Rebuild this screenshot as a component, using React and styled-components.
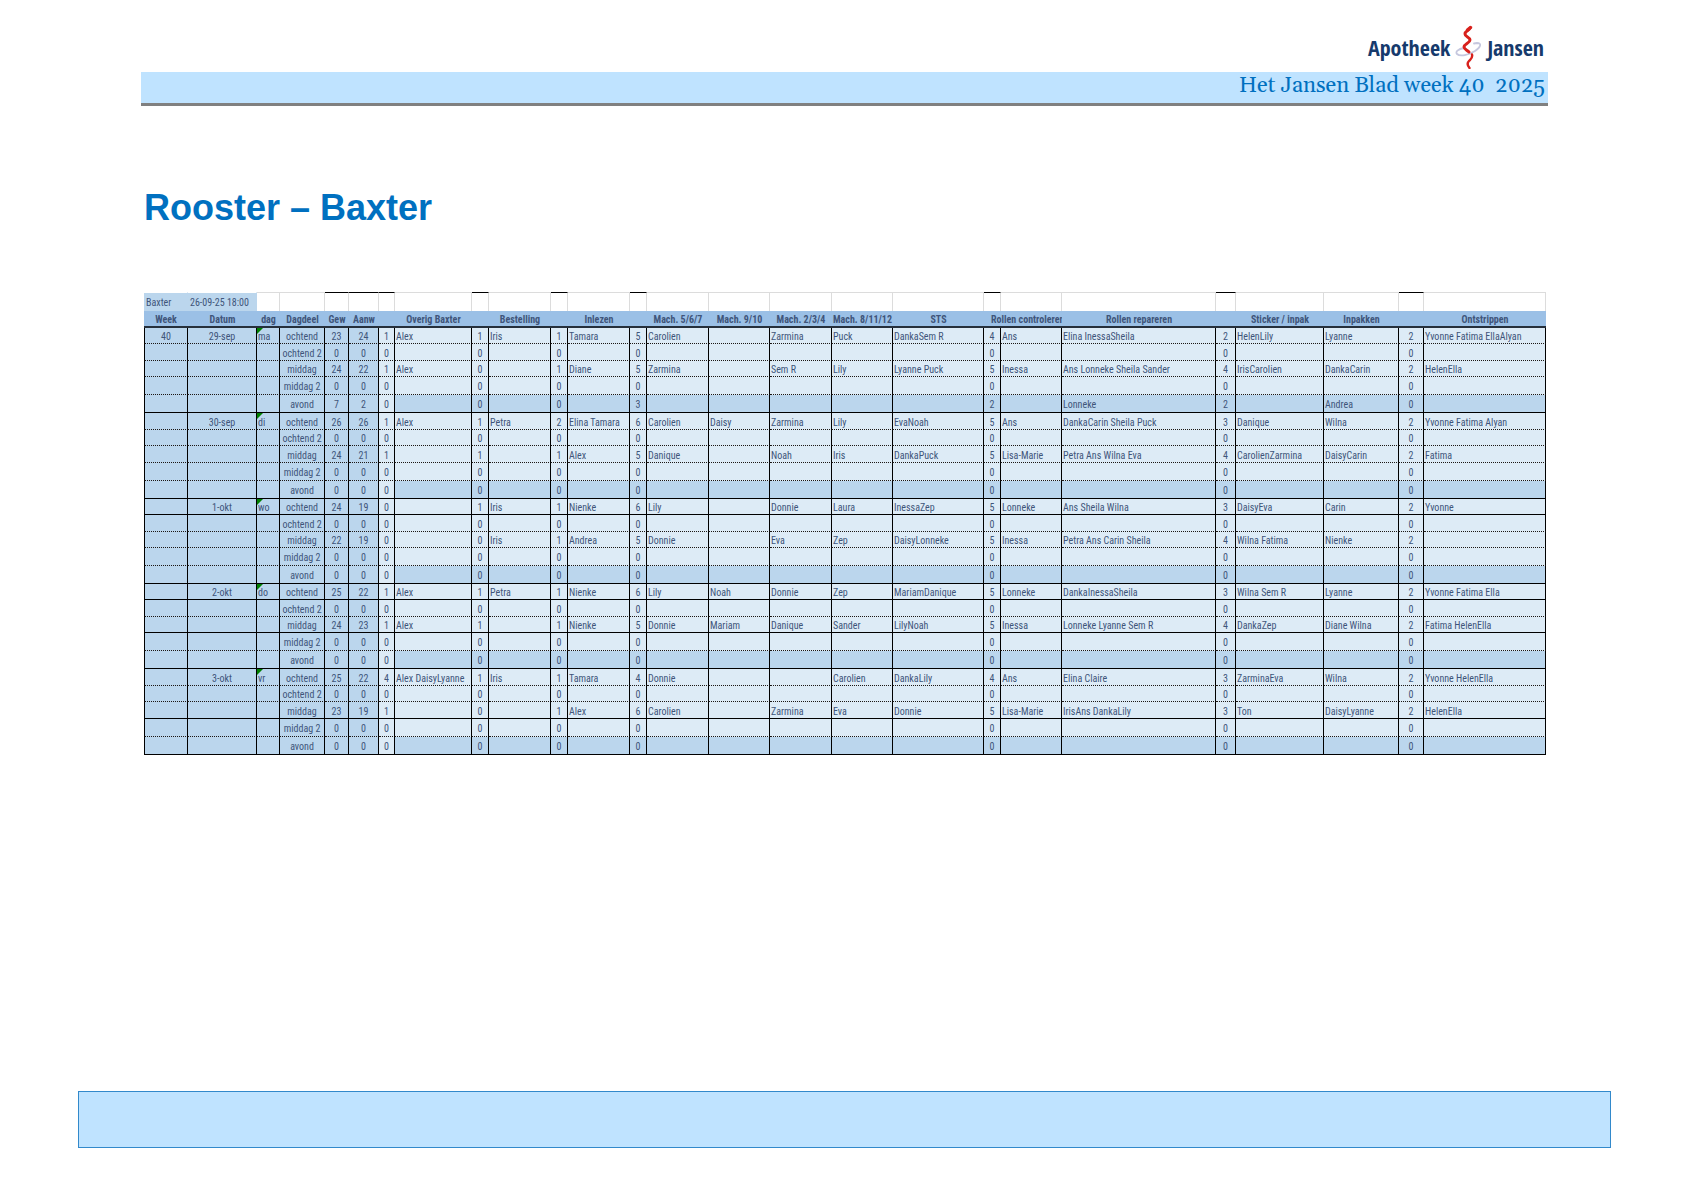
import React from "react";
import styled, { createGlobalStyle } from "styled-components";

const GlobalStyle = createGlobalStyle`
  * { box-sizing: border-box; }
  body { margin: 0; background: #fff; }
`;

const Page = styled.div`
  min-height: 100vh;
  display: flex;
  flex-direction: column;
  font-family: "Liberation Sans", Arial, sans-serif;
`;

const Header = styled.header`
  margin: 25px 136px 0 141px;
`;

const Logo = styled.div`
  display: flex;
  justify-content: flex-end;
  align-items: center;
  gap: 5px;
  height: 47px;
  padding: 0 4px 4px 0;
  color: #163a6c;
  font: 700 22px/24px "Open Sans Condensed", "Open Sans", "Noto Sans", sans-serif;
`;

const Banner = styled.div`
  height: 34px;
  padding-right: 3px;
  background: #bfe3ff;
  border-bottom: 3px solid #808080;
  color: #0070c0;
  font: 22px/28px Georgia, Gelasio, "Liberation Serif", serif;
  text-align: right;
  white-space: pre;
`;

const Main = styled.main`
  flex: 1;
  padding: 0 138px 0 144px;
`;

const Title = styled.h1`
  margin: 80px 0 62px;
  color: #0070c0;
  font-size: 36px;
  line-height: 44px;
`;

const Sheet = styled.table`
  width: 100%;
  table-layout: fixed;
  border-collapse: separate;
  border-spacing: 0;
  color: #40557a;
  font: 10px/13px "Liberation Sans Narrow", "Arial Narrow", "Roboto Condensed", "Liberation Sans", sans-serif;
  white-space: nowrap;
`;

const InfoCell = styled.td`
  height: 19px;
  padding: 1px 2px 0;
  border-top: 1px solid ${(p) => (p.$filled ? "#fff" : p.$marked ? "#000" : "#dcdcdc")};
  border-right: 1px solid ${(p) => (p.$filled ? "#bbd6ed" : "#dcdcdc")};
  background: ${(p) => (p.$filled ? "#bbd6ed" : "#fff")};
  text-align: left;
`;

const HeadCell = styled.th`
  height: 17px;
  padding: 1px 0 0 ${(p) => (p.$wide ? 7 : 0)}px;
  overflow: hidden;
  background: #9bc0e6;
  border-bottom: 2px solid #26303c;
  font-weight: 700;
  text-align: ${(p) => (p.$wide ? "left" : "center")};
`;

const Cell = styled.td`
  position: relative;
  height: ${(p) => p.$height}px;
  padding: 2px ${(p) => (p.$align === "left" ? 1 : 0)}px 0;
  background: ${(p) => (p.$dark ? "#bbd6ed" : "#ddebf6")};
  border-right: 1px solid #000;
  border-bottom: 1px ${(p) => (p.$solid ? "solid #000" : "dotted #1c1714")};
  text-align: ${(p) => p.$align};

  &:first-child { border-left: 1px solid #000; }
`;

const Flag = styled.span`
  position: absolute;
  top: 0;
  left: 0;
  border-top: 6px solid #008000;
  border-right: 6px solid transparent;
`;

const Footer = styled.footer`
  height: 57px;
  margin: 0 73px 43px 78px;
  background: #bfe3ff;
  border: 1px solid #3289cb;
`;

const columns = [
  ["Week", 44, "center"],
  ["Datum", 69, "center"],
  ["dag", 23, "left"],
  ["Dagdeel", 45, "center"],
  ["Gew", 24, "center"],
  ["Aanw", 30, "center"],
  ["", 16, "center"],
  ["Overig Baxter", 77, "left"],
  ["", 17, "center"],
  ["Bestelling", 62, "left"],
  ["", 17, "center"],
  ["Inlezen", 62, "left"],
  ["", 17, "center"],
  ["Mach. 5/6/7", 62, "left"],
  ["Mach. 9/10", 61, "left"],
  ["Mach. 2/3/4", 62, "left"],
  ["Mach. 8/11/12", 61, "left"],
  ["STS", 91, "left"],
  ["", 17, "center"],
  ["Rollen controleren", 61, "left"],
  ["Rollen repareren", 154, "left"],
  ["", 20, "center"],
  ["Sticker / inpak", 88, "left"],
  ["Inpakken", 75, "left"],
  ["", 25, "center"],
  ["Ontstrippen", 122, "left"],
];

const marked = [4, 5, 6, 8, 10, 12, 18, 21, 24];

const parts = ["ochtend", "ochtend 2", "middag", "middag 2", "avond"];

const days = [
  { week: "40", date: "29-sep", day: "ma", heights: [16, 17, 16, 18, 18], solid: [4], rows: [
    "23|24|1|Alex|1|Iris|1|Tamara|5|Carolien||Zarmina|Puck|DankaSem R|4|Ans|Elina InessaSheila|2|HelenLily|Lyanne|2|Yvonne Fatima EllaAlyan",
    "0|0|0||0||0||0||||||0|||0|||0|",
    "24|22|1|Alex|0||1|Diane|5|Zarmina||Sem R|Lily|Lyanne Puck|5|Inessa|Ans Lonneke Sheila Sander|4|IrisCarolien|DankaCarin|2|HelenElla",
    "0|0|0||0||0||0||||||0|||0|||0|",
    "7|2|0||0||0||3||||||2||Lonneke|2||Andrea|0|",
  ] },
  { week: "", date: "30-sep", day: "di", heights: [17, 16, 17, 18, 18], solid: [4], rows: [
    "26|26|1|Alex|1|Petra|2|Elina Tamara|6|Carolien|Daisy|Zarmina|Lily|EvaNoah|5|Ans|DankaCarin Sheila Puck|3|Danique|Wilna|2|Yvonne Fatima Alyan",
    "0|0|0||0||0||0||||||0|||0|||0|",
    "24|21|1||1||1|Alex|5|Danique||Noah|Iris|DankaPuck|5|Lisa-Marie|Petra Ans Wilna Eva|4|CarolienZarmina|DaisyCarin|2|Fatima",
    "0|0|0||0||0||0||||||0|||0|||0|",
    "0|0|0||0||0||0||||||0|||0|||0|",
  ] },
  { week: "", date: "1-okt", day: "wo", heights: [16, 17, 16, 18, 18], solid: [0, 4], rows: [
    "24|19|0||1|Iris|1|Nienke|6|Lily||Donnie|Laura|InessaZep|5|Lonneke|Ans Sheila Wilna|3|DaisyEva|Carin|2|Yvonne",
    "0|0|0||0||0||0||||||0|||0|||0|",
    "22|19|0||0|Iris|1|Andrea|5|Donnie||Eva|Zep|DaisyLonneke|5|Inessa|Petra Ans Carin Sheila|4|Wilna Fatima|Nienke|2|",
    "0|0|0||0||0||0||||||0|||0|||0|",
    "0|0|0||0||0||0||||||0|||0|||0|",
  ] },
  { week: "", date: "2-okt", day: "do", heights: [16, 17, 16, 18, 18], solid: [0, 2, 4], rows: [
    "25|22|1|Alex|1|Petra|1|Nienke|6|Lily|Noah|Donnie|Zep|MariamDanique|5|Lonneke|DankaInessaSheila|3|Wilna Sem R|Lyanne|2|Yvonne Fatima Ella",
    "0|0|0||0||0||0||||||0|||0|||0|",
    "24|23|1|Alex|1||1|Nienke|5|Donnie|Mariam|Danique|Sander|LilyNoah|5|Inessa|Lonneke Lyanne Sem R|4|DankaZep|Diane Wilna|2|Fatima HelenElla",
    "0|0|0||0||0||0||||||0|||0|||0|",
    "0|0|0||0||0||0||||||0|||0|||0|",
  ] },
  { week: "", date: "3-okt", day: "vr", heights: [17, 16, 17, 18, 18], solid: [2, 4], rows: [
    "25|22|4|Alex DaisyLyanne|1|Iris|1|Tamara|4|Donnie|||Carolien|DankaLily|4|Ans|Elina Claire|3|ZarminaEva|Wilna|2|Yvonne HelenElla",
    "0|0|0||0||0||0||||||0|||0|||0|",
    "23|19|1||0||1|Alex|6|Carolien||Zarmina|Eva|Donnie|5|Lisa-Marie|IrisAns DankaLily|3|Ton|DaisyLyanne|2|HelenElla",
    "0|0|0||0||0||0||||||0|||0|||0|",
    "0|0|0||0||0||0||||||0|||0|||0|",
  ] },
];

function LogoMark() {
  return (
    <svg width="27" height="44" viewBox="0 0 27 44" fill="none" strokeLinecap="round" strokeLinejoin="round" aria-hidden="true">
      <path d="M9 23C3 24 0 27 2 29C5 32 14 30 20 26C26 22 27 18 22 18L19 18.500" stroke="#c5c7de" strokeWidth="1.800" />
      <path d="M15 3C14 6 10 6 10 9C10 12 15 12 15 15C15 18 9 19 9 22C9 24 12 25 14 27" stroke="#d8211c" strokeWidth="3" />
      <path d="M15.500 2.500L12.500 5" stroke="#d8211c" strokeWidth="3.500" />
      <path d="M17 29.500C18 33 16 34 14 36C12 38 12 40 14.500 43" stroke="#d8211c" strokeWidth="2.400" />
    </svg>
  );
}

function HeadRow() {
  return (
    <tr>
      {columns.map(([label], i) => {
        if (i === 18) return null;
        const wide = i === 19;
        return (
          <HeadCell key={i} scope="col" colSpan={wide ? 2 : 1} $wide={wide}>{label}</HeadCell>
        );
      })}
    </tr>
  );
}

function DayRows({ entry }) {
  return entry.rows.map((row, r) => {
    const first = r === 0;
    const values = [first ? entry.week : "", first ? entry.date : "", first ? entry.day : "", parts[r], ...row.split("|")];
    return (
      <tr key={r}>
        {values.map((value, c) => (
          <Cell
            key={c}
            $height={entry.heights[r]}
            $align={columns[c][2]}
            $dark={c < 6 || (r === 4 && c > 6)}
            $solid={entry.solid.includes(r)}
          >
            {c === 2 && first && <Flag />}
            {value}
          </Cell>
        ))}
      </tr>
    );
  });
}

export default function App() {
  return (
    <Page>
      <GlobalStyle />
      <Header>
        <Logo>
          <span>Apotheek</span>
          <LogoMark />
          <span>Jansen</span>
        </Logo>
        <Banner>{"Het Jansen Blad week 40  2025"}</Banner>
      </Header>
      <Main>
        <Title>Rooster – Baxter</Title>
        <Sheet>
          <colgroup>
            {columns.map(([, width], i) => (
              <col key={i} style={{ width }} />
            ))}
          </colgroup>
          <thead>
            <tr>
              {columns.map((_, i) => (
                <InfoCell key={i} $filled={i < 2} $marked={marked.includes(i)}>
                  {i === 0 ? "Baxter" : i === 1 ? "26-09-25 18:00" : ""}
                </InfoCell>
              ))}
            </tr>
            <HeadRow />
          </thead>
          <tbody>
            {days.map((entry) => (
              <DayRows key={entry.date} entry={entry} />
            ))}
          </tbody>
        </Sheet>
      </Main>
      <Footer />
    </Page>
  );
}
